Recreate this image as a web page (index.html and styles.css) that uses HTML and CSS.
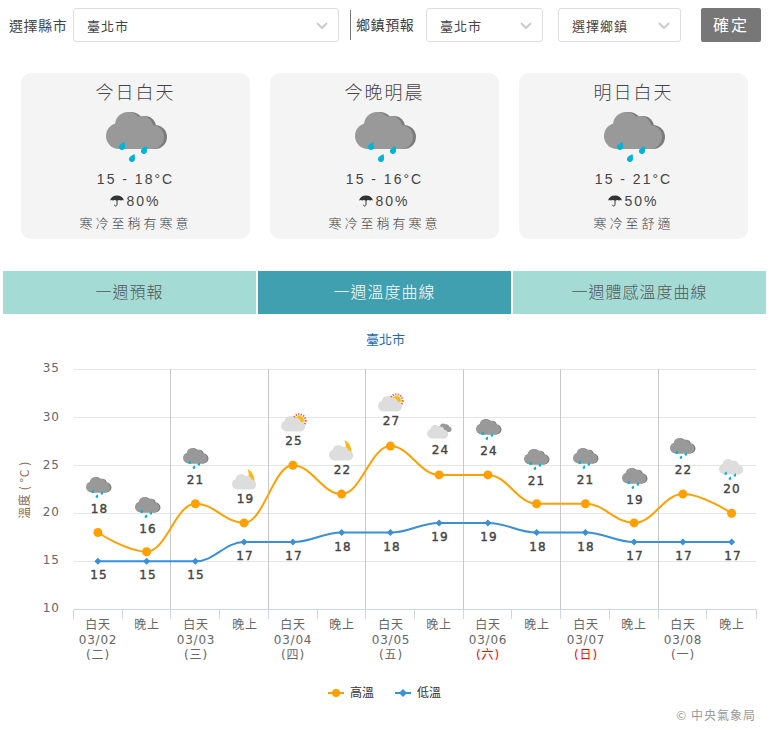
FILE: index.html
```html
<!DOCTYPE html>
<html lang="zh-Hant">
<head>
<meta charset="utf-8">
<title>一週溫度曲線</title>
<link rel="stylesheet" href="styles.css">
</head>
<body>
<svg class="defs" width="0" height="0" aria-hidden="true">
  <defs>
    <symbol id="cloud-shape" viewBox="0 0 60 37" overflow="visible">
      <circle cx="13" cy="24" r="13"/><circle cx="22" cy="13" r="13"/><circle cx="36" cy="15" r="11"/><circle cx="46" cy="25" r="12"/><rect x="13" y="18" width="33" height="19"/>
    </symbol>
    <g id="drops" class="drop">
      <path d="M18.500 30c.5 3 .7 4.500.3 6a3 3 0 1 1-5.400-2.500c1.100-1.500 3.600-2.500 5.100-3.500z"/>
      <path d="M40.500 34c.5 3 .7 4.500.3 6a3 3 0 1 1-5.400-2.500c1.100-1.500 3.600-2.500 5.100-3.500z"/>
      <path d="M28.500 42c.5 3 .7 4.500.3 6a3 3 0 1 1-5.400-2.500c1.100-1.500 3.600-2.500 5.100-3.500z"/>
    </g>
    <symbol id="rain" viewBox="0 -12 64 64">
      <use href="#cloud-shape" x="3" y="0" width="60" height="37" class="cloud-shade"/>
      <use href="#cloud-shape" x="0" y="0" width="60" height="37" class="cloud-dark"/>
      <use href="#drops"/>
    </symbol>
    <symbol id="rain-light" viewBox="0 -12 64 64">
      <use href="#cloud-shape" x="0" y="0" width="60" height="37" class="cloud-light"/>
      <use href="#drops"/>
    </symbol>
    <symbol id="sun-cloud" viewBox="0 -12 64 64">
      <circle cx="44" cy="11" r="15" class="sun-ray"/>
      <circle cx="44" cy="11" r="11" class="sun"/>
      <use href="#cloud-shape" x="0" y="0" width="60" height="37" class="cloud-light"/>
    </symbol>
    <symbol id="moon-cloud" viewBox="0 -12 64 64">
      <path class="sun" d="M37-12c9 4 16 14 17 27c0 3-1 5-2 7L38 12c3-7 3-15-1-24z"/>
      <use href="#cloud-shape" x="0" y="0" width="60" height="37" class="cloud-light"/>
    </symbol>
  </defs>
</svg>

<form class="filters">
  <label class="filter-label">選擇縣市</label>
  <div class="select select-county"><span>臺北市</span><svg class="chevron" viewBox="0 0 12 7"><path d="M1 1l5 5 5-5"/></svg></div>
  <label class="filter-label filter-label-town">鄉鎮預報</label>
  <div class="select select-city"><span>臺北市</span><svg class="chevron" viewBox="0 0 12 7"><path d="M1 1l5 5 5-5"/></svg></div>
  <div class="select select-town"><span>選擇鄉鎮</span><svg class="chevron" viewBox="0 0 12 7"><path d="M1 1l5 5 5-5"/></svg></div>
  <button class="confirm" type="button">確定</button>
</form>

<section class="cards">
  <article class="card">
    <h2 class="card-title">今日白天</h2>
    <svg class="card-icon"><use href="#rain"/></svg>
    <p class="card-temp">15 - 18°C</p>
    <p class="card-rain"><svg class="umbrella" viewBox="0 0 14 12"><path class="umbrella-top" d="M0 5.500C1 2 3.500.5 7 .5s6 1.500 7 5c-1-.8-2-.8-3 0-1-.8-2.500-.8-3.500 0h-1c-1-.8-2.500-.8-3.500 0-1-.8-2-.8-3 0z"/><path class="umbrella-stem" d="M7 5v4.500c0 2 -2.500 2-2.500.3"/></svg>80%</p>
    <p class="card-note">寒冷至稍有寒意</p>
  </article>
  <article class="card">
    <h2 class="card-title">今晚明晨</h2>
    <svg class="card-icon"><use href="#rain"/></svg>
    <p class="card-temp">15 - 16°C</p>
    <p class="card-rain"><svg class="umbrella" viewBox="0 0 14 12"><path class="umbrella-top" d="M0 5.500C1 2 3.500.5 7 .5s6 1.500 7 5c-1-.8-2-.8-3 0-1-.8-2.500-.8-3.500 0h-1c-1-.8-2.500-.8-3.500 0-1-.8-2-.8-3 0z"/><path class="umbrella-stem" d="M7 5v4.500c0 2 -2.500 2-2.500.3"/></svg>80%</p>
    <p class="card-note">寒冷至稍有寒意</p>
  </article>
  <article class="card">
    <h2 class="card-title">明日白天</h2>
    <svg class="card-icon"><use href="#rain"/></svg>
    <p class="card-temp">15 - 21°C</p>
    <p class="card-rain"><svg class="umbrella" viewBox="0 0 14 12"><path class="umbrella-top" d="M0 5.500C1 2 3.500.5 7 .5s6 1.500 7 5c-1-.8-2-.8-3 0-1-.8-2.500-.8-3.500 0h-1c-1-.8-2.500-.8-3.500 0-1-.8-2-.8-3 0z"/><path class="umbrella-stem" d="M7 5v4.500c0 2 -2.500 2-2.500.3"/></svg>50%</p>
    <p class="card-note">寒冷至舒適</p>
  </article>
</section>

<nav class="tabs">
  <a class="tab">一週預報</a>
  <a class="tab tab-active">一週溫度曲線</a>
  <a class="tab">一週體感溫度曲線</a>
</nav>

<svg class="chart" viewBox="0 320 777 411" width="777" height="411" role="img">
  <text class="chart-title" x="385.500" y="344">臺北市</text>

  <g class="grid">
    <path d="M73.500 369.500H756M73.500 417.500H756M73.500 465.500H756M73.500 513.500H756M73.500 561.500H756"/>
  </g>
  <g class="day-lines">
    <path d="M170.500 369.500V609M268.500 369.500V609M365.500 369.500V609M463.500 369.500V609M560.500 369.500V609M658.500 369.500V609"/>
  </g>
  <g class="axis">
    <path d="M73.500 609.500H756.500M73.500 609.500V619M122.500 609.500V619M170.500 609.500V619M219.500 609.500V619M268.500 609.500V619M317.500 609.500V619M365.500 609.500V619M414.500 609.500V619M463.500 609.500V619M511.500 609.500V619M560.500 609.500V619M609.500 609.500V619M658.500 609.500V619M706.500 609.500V619M756.500 609.500V619"/>
  </g>

  <g class="y-labels">
    <text x="60" y="372">35</text>
    <text x="60" y="421">30</text>
    <text x="60" y="469">25</text>
    <text x="60" y="516">20</text>
    <text x="60" y="564">15</text>
    <text x="60" y="612">10</text>
  </g>
  <text class="y-title" transform="translate(29 490) rotate(-90)">溫度 ( °C )</text>

  <path class="line line-high" d="M97.900 532.500c0 0 29.250 19.200 48.750 19.200c19.500 0 29.250-48 48.750-48c19.500 0 29.250 19.200 48.750 19.200c19.500 0 29.250-57.600 48.750-57.600c19.500 0 29.250 28.800 48.750 28.800c19.500 0 29.250-48 48.750-48c19.500 0 29.250 28.800 48.750 28.800c19.500 0 29.250 0 48.750 0c19.500 0 29.250 28.800 48.750 28.800c19.500 0 29.250 0 48.750 0c19.500 0 29.250 19.200 48.750 19.200c19.500 0 29.250-28.800 48.750-28.800c19.500 0 48.750 19.200 48.750 19.200"/>
  <path class="line line-low" d="M97.900 561.300c0 0 29.250 0 48.750 0c19.500 0 29.250 0 48.750 0c19.500 0 29.250-19.200 48.750-19.200c19.500 0 29.250 0 48.750 0c19.500 0 29.250-9.600 48.750-9.600c19.500 0 29.250 0 48.750 0c19.500 0 29.250-9.600 48.750-9.600c19.500 0 29.250 0 48.750 0c19.500 0 29.250 9.600 48.750 9.600c19.500 0 29.250 0 48.750 0c19.500 0 29.250 9.600 48.750 9.600c19.500 0 29.250 0 48.750 0c19.500 0 48.750 0 48.750 0"/>

  <g class="marker-high">
    <circle cx="97.900" cy="532.500" r="4.500"/><circle cx="146.600" cy="551.700" r="4.500"/><circle cx="195.400" cy="503.700" r="4.500"/><circle cx="244.100" cy="522.900" r="4.500"/><circle cx="292.900" cy="465.300" r="4.500"/><circle cx="341.600" cy="494.100" r="4.500"/><circle cx="390.400" cy="446.100" r="4.500"/><circle cx="439.100" cy="474.900" r="4.500"/><circle cx="487.900" cy="474.900" r="4.500"/><circle cx="536.600" cy="503.700" r="4.500"/><circle cx="585.400" cy="503.700" r="4.500"/><circle cx="634.100" cy="522.900" r="4.500"/><circle cx="682.900" cy="494.100" r="4.500"/><circle cx="731.600" cy="513.300" r="4.500"/>
  </g>
  <g class="marker-low">
    <path d="M97.900 557.800l3.500 3.500-3.500 3.500-3.500-3.500z"/><path d="M146.600 557.800l3.500 3.500-3.500 3.500-3.500-3.500z"/><path d="M195.400 557.800l3.500 3.500-3.500 3.500-3.500-3.500z"/><path d="M244.100 538.600l3.500 3.500-3.500 3.500-3.500-3.500z"/><path d="M292.900 538.600l3.500 3.500-3.500 3.500-3.500-3.500z"/><path d="M341.600 529l3.500 3.500-3.500 3.500-3.500-3.500z"/><path d="M390.400 529l3.500 3.500-3.500 3.500-3.500-3.500z"/><path d="M439.100 519.400l3.500 3.500-3.500 3.500-3.500-3.500z"/><path d="M487.900 519.400l3.500 3.500-3.500 3.500-3.500-3.500z"/><path d="M536.600 529l3.500 3.500-3.500 3.500-3.500-3.500z"/><path d="M585.400 529l3.500 3.500-3.500 3.500-3.500-3.500z"/><path d="M634.100 538.600l3.500 3.500-3.500 3.500-3.500-3.500z"/><path d="M682.900 538.600l3.500 3.500-3.500 3.500-3.500-3.500z"/><path d="M731.600 538.600l3.500 3.500-3.500 3.500-3.500-3.500z"/>
  </g>

  <g class="weather-icons">
    <use href="#rain" x="86" y="472" width="26.700" height="26.700"/>
    <use href="#rain" x="135" y="492" width="26.700" height="26.700"/>
    <use href="#rain" x="183" y="443" width="26.700" height="26.700"/>
    <use href="#moon-cloud" x="232" y="469" width="26.700" height="26.700"/>
    <use href="#sun-cloud" x="281" y="411" width="26.700" height="26.700"/>
    <use href="#moon-cloud" x="329" y="440" width="26.700" height="26.700"/>
    <use href="#sun-cloud" x="378" y="391" width="26.700" height="26.700"/>
    <use href="#cloud-shape" x="438" y="423" width="14" height="9.500" class="cloud-dark"/>
    <use href="#cloud-shape" x="427" y="425" width="22" height="13.500" class="cloud-light"/>
    <use href="#rain" x="476" y="414" width="26.700" height="26.700"/>
    <use href="#rain" x="524" y="444" width="26.700" height="26.700"/>
    <use href="#rain" x="573" y="443" width="26.700" height="26.700"/>
    <use href="#rain" x="622" y="463" width="26.700" height="26.700"/>
    <use href="#rain" x="670" y="433" width="26.700" height="26.700"/>
    <use href="#rain-light" x="719" y="454" width="26.700" height="26.700"/>
  </g>

  <g class="data-labels">
    <text x="99.500" y="513">18</text><text x="148" y="533">16</text><text x="195.500" y="484">21</text><text x="245.500" y="503">19</text><text x="294" y="445">25</text><text x="342.500" y="474">22</text><text x="391.500" y="425">27</text><text x="440.500" y="454">24</text><text x="489" y="455">24</text><text x="536.500" y="485">21</text><text x="585.500" y="484">21</text><text x="635" y="504">19</text><text x="683.500" y="474">22</text><text x="732" y="493">20</text>
    <text x="99" y="579">15</text><text x="148" y="579">15</text><text x="196" y="579">15</text><text x="245" y="560">17</text><text x="294" y="560">17</text><text x="343" y="551">18</text><text x="392" y="551">18</text><text x="440" y="541">19</text><text x="489" y="541">19</text><text x="538" y="551">18</text><text x="586" y="551">18</text><text x="635" y="560">17</text><text x="684" y="560">17</text><text x="733" y="560">17</text>
  </g>

  <g class="x-labels">
    <text x="98" y="629">白天</text><text x="98" y="644">03/02</text><text x="98" y="659">(二)</text>
    <text x="147" y="629">晚上</text>
    <text x="196" y="629">白天</text><text x="196" y="644">03/03</text><text x="196" y="659">(三)</text>
    <text x="245" y="629">晚上</text>
    <text x="293" y="629">白天</text><text x="293" y="644">03/04</text><text x="293" y="659">(四)</text>
    <text x="342" y="629">晚上</text>
    <text x="391" y="629">白天</text><text x="391" y="644">03/05</text><text x="391" y="659">(五)</text>
    <text x="439" y="629">晚上</text>
    <text x="488" y="629">白天</text><text x="488" y="644">03/06</text><text class="holiday" x="488" y="659">(六)</text>
    <text x="537" y="629">晚上</text>
    <text x="586" y="629">白天</text><text x="586" y="644">03/07</text><text class="holiday" x="586" y="659">(日)</text>
    <text x="634" y="629">晚上</text>
    <text x="683" y="629">白天</text><text x="683" y="644">03/08</text><text x="683" y="659">(一)</text>
    <text x="732" y="629">晚上</text>
  </g>

  <g class="legend">
    <path class="line line-high" d="M328 693h16"/><circle class="legend-high" cx="336" cy="693" r="4"/>
    <text x="350" y="697">高溫</text>
    <path class="line line-low" d="M395 693h16"/><path class="legend-low" d="M403 689l4 4-4 4-4-4z"/>
    <text x="417" y="697">低溫</text>
  </g>
  <text class="credit" x="756" y="720">© 中央氣象局</text>
</svg>
</body>
</html>
```

FILE: styles.css
```css
* { box-sizing: border-box; }

html, body {
  margin: 0;
  padding: 0;
  background: #fff;
}

body {
  width: 777px;
  height: 731px;
  overflow: hidden;
  font-family: "Liberation Sans", "Noto Sans CJK TC", sans-serif;
  color: #444;
}

.defs { position: absolute; }

/* filter row */
.filters {
  display: flex;
  align-items: center;
  height: 34px;
  margin-top: 8px;
  padding-left: 9px;
}

.filter-label {
  font-size: 14px;
  letter-spacing: .6px;
  color: #444;
  white-space: nowrap;
  width: 64px;
}

.filter-label-town {
  width: 76px;
  height: 30px;
  line-height: 30px;
  margin-left: 11px;
  padding-left: 5px;
  border-left: 1px solid #777;
}

.select {
  display: flex;
  align-items: center;
  justify-content: space-between;
  height: 34px;
  padding: 0 10px 0 13px;
  background: #fff;
  border: 1px solid #ddd;
  border-radius: 3px;
  font-size: 13px;
  letter-spacing: 1px;
  color: #444;
}

.select-county { width: 266px; }
.select-city { width: 117px; }
.select-town { width: 123px; margin-left: 15px; }

.chevron {
  width: 12px;
  height: 7px;
  fill: none;
  stroke: #ccc;
  stroke-width: 2;
}

.confirm {
  width: 60px;
  height: 34px;
  margin-left: 20px;
  padding: 0 0 2px;
  border: 0;
  border-radius: 2px;
  background: #777;
  color: #fff;
  font: 16px "Liberation Sans", "Noto Sans CJK TC", sans-serif;
  letter-spacing: 2px;
}

/* forecast cards */
.cards {
  display: flex;
  gap: 20px;
  margin-top: 31px;
  padding-left: 21px;
}

.card {
  display: flex;
  flex-direction: column;
  align-items: center;
  width: 229px;
  height: 166px;
  background: #f4f4f4;
  border-radius: 10px;
  letter-spacing: 2px;
}

.card-title {
  margin: 7px 0 0;
  font-size: 18px;
  font-weight: 300;
  line-height: 26px;
  color: #444;
}

.card-icon {
  display: block;
  width: 64px;
  height: 64px;
  margin-top: -6px;
  margin-left: 4px;
}

.card-temp,
.card-rain,
.card-note {
  margin: 0;
  font-size: 14px;
  line-height: 22px;
}

.card-temp { margin-top: 4px; }

.card-rain {
  display: flex;
  align-items: center;
}

.card-note {
  margin-top: 1px;
  font-size: 13px;
  font-weight: 300;
  letter-spacing: 3px;
}

.umbrella {
  width: 14px;
  height: 12px;
  margin-right: 2px;
}

.umbrella-top { fill: #333; }

.umbrella-stem {
  fill: none;
  stroke: #333;
  stroke-width: 1;
}

/* tabs */
.tabs {
  display: flex;
  gap: 2px;
  margin-top: 32px;
  padding-left: 3px;
}

.tab {
  width: 253px;
  height: 43px;
  line-height: 43px;
  text-align: center;
  font-size: 16px;
  font-weight: 300;
  letter-spacing: 1px;
  background: #a5dbd5;
  color: #555;
}

.tab-active {
  background: #40a0af;
  color: #fff;
}

/* chart */
.chart {
  display: block;
  margin-top: 6px;
  font-family: "Noto Sans CJK TC", sans-serif;
}

.chart-title {
  font-size: 13px;
  fill: #1a6bb5;
  text-anchor: middle;
}

.grid path { stroke: #e6e6e6; fill: none; }
.day-lines path { stroke: #c8c8c8; fill: none; }
.axis path { stroke: #ccd6eb; fill: none; }

.y-labels text {
  font-family: "DejaVu Sans", sans-serif;
  font-size: 12px;
  letter-spacing: 1px;
  fill: #666;
  text-anchor: end;
}

.y-title {
  font-size: 12px;
  letter-spacing: .6px;
  fill: #8d6e4f;
  text-anchor: middle;
}

.line {
  fill: none;
  stroke-width: 2;
}

.line-high { stroke: #ffa000; }
.line-low { stroke: #3b8fd6; }
.marker-high circle, .legend-high { fill: #ffa000; }
.marker-low path, .legend-low { fill: #3b8fd6; }

.data-labels text {
  font-family: "DejaVu Sans", sans-serif;
  font-size: 12px;
  fill: #444;
  stroke: #444;
  stroke-width: .4px;
  text-anchor: middle;
  letter-spacing: 1px;
}

.x-labels text {
  font-family: "DejaVu Sans", "Noto Sans CJK TC", sans-serif;
  font-size: 12px;
  letter-spacing: .8px;
  fill: #666;
  text-anchor: middle;
}

.x-labels .holiday { fill: #f00; }

.legend text {
  font-size: 12px;
  fill: #333;
}

.credit {
  font-size: 12px;
  fill: #999;
  text-anchor: end;
  letter-spacing: 1px;
}

/* weather icon paints */
.cloud-dark { fill: #999; }
.cloud-shade { fill: #7c7c7c; }
.cloud-light { fill: #ddd; }
.drop { fill: #00b4d8; }
.sun { fill: #fdb813; }
.sun-ray { fill: none; stroke: #f2603c; stroke-width: 5; stroke-dasharray: 3 3; }
```
